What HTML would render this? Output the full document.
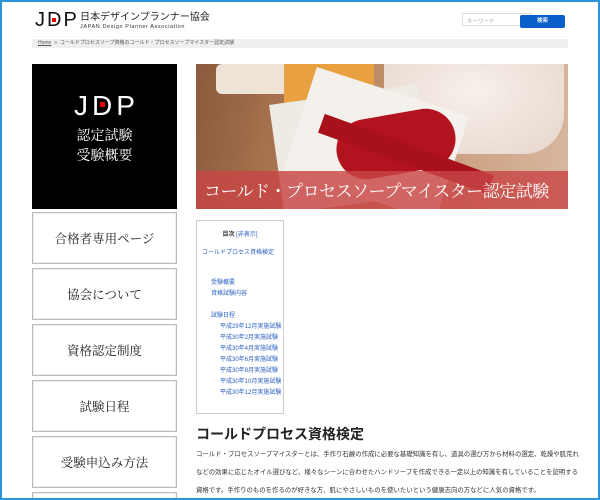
<!DOCTYPE html>
<html style="width:600px;height:500px;overflow:hidden"><head><meta charset="utf-8"><style>
*{margin:0;padding:0;box-sizing:border-box}
body{width:600px;height:500px;overflow:hidden;background:#fff;font-family:"Liberation Sans","Noto Sans CJK JP",sans-serif;position:relative}
.frame{position:absolute;left:0;top:0;width:600px;height:500px;border:2px solid #2a96d6;pointer-events:none;z-index:10}
.abs{position:absolute}
.nav{position:absolute;left:32px;width:145px;height:52px;border:1px solid #bbb;background:#fff;font-family:"Noto Serif CJK SC","Liberation Serif",serif;font-size:12.5px;color:#222;display:flex;align-items:center;justify-content:center;box-shadow:inset 0 0 0 1px #eee}
.toc a{display:block;color:#2a5fc0;font-size:6px;line-height:10px;text-decoration:none;white-space:nowrap}
p.t{position:absolute;left:196px;font-size:6.4px;color:#333;white-space:nowrap}
</style></head><body>
<div class="frame"></div>
<!-- header -->
<div class="abs" style="left:35px;top:9px;font-size:20px;letter-spacing:2px;color:#111;font-weight:300;line-height:22px">J<span style="position:relative">D<span style="position:absolute;left:5px;top:9px;width:4px;height:4px;background:#e00"></span></span>P</div>
<div class="abs" style="left:80px;top:12px;font-size:10px;color:#222;line-height:11px">日本デザインプランナー協会</div>
<div class="abs" style="left:80px;top:24px;font-size:5.5px;color:#333;letter-spacing:.6px">JAPAN Design Planner Association</div>
<div class="abs" style="left:462px;top:13px;width:70px;height:13px;border:1px solid #ddd;font-size:5.5px;color:#aaa;padding:3px 4px">キーワード</div>
<div class="abs" style="left:520px;top:15px;width:45px;height:13px;background:#0a5fc8;border-radius:2px;color:#fff;font-size:5.5px;text-align:center;line-height:13px;font-weight:bold">検索</div>
<div class="abs" style="left:32px;top:39px;width:536px;height:9px;background:#f0efed;font-size:5px;color:#555;line-height:9px;padding-left:6px;white-space:nowrap"><u>Home</u> &nbsp;&gt;&nbsp; コールドプロセスソープ資格のコールド・プロセスソープマイスター認定試験</div>
<!-- sidebar -->
<div class="abs" style="left:32px;top:64px;width:145px;height:145px;background:#000;color:#fff;text-align:center">
<div style="margin-top:27px;font-size:28px;letter-spacing:4px;padding-left:4px;font-weight:300;line-height:30px;position:relative">J<span style="position:relative">D<span style="position:absolute;left:8px;top:12px;width:5px;height:5px;background:#e00"></span></span>P</div>
<div style="font-family:'Noto Serif CJK SC',serif;font-size:14px;line-height:20px;margin-top:4px">認定試験<br>受験概要</div></div>
<div class="nav" style="top:212px">合格者専用ページ</div>
<div class="nav" style="top:268px">協会について</div>
<div class="nav" style="top:324px">資格認定制度</div>
<div class="nav" style="top:380px">試験日程</div>
<div class="nav" style="top:436px">受験申込み方法</div>
<div class="nav" style="top:492px;height:8px">&nbsp;</div>
<!-- hero -->
<div class="abs" style="left:196px;top:64px;width:372px;height:145px;overflow:hidden;background:linear-gradient(100deg,#8a5a3c 0%,#b07a55 30%,#c89a78 60%,#d8b8a0 100%)">
<div class="abs" style="left:20px;top:0;width:100px;height:30px;background:#eee3d6;border-radius:6px"></div>
<div class="abs" style="left:88px;top:0;width:90px;height:40px;background:#e8a040"></div>
<div class="abs" style="left:188px;top:0;width:180px;height:90px;background:radial-gradient(ellipse at 50% 30%,#f7f0ea,#e6d6cc);border-radius:0 0 40px 40px"></div>
<div class="abs" style="left:80px;top:30px;width:150px;height:110px;background:#eeeae4;transform:rotate(-8deg)"></div>
<div class="abs" style="left:100px;top:25px;width:160px;height:110px;background:#f4f1ec;transform:rotate(18deg)"></div>
<div class="abs" style="left:140px;top:50px;width:120px;height:60px;background:#b3121f;border-radius:30px;transform:rotate(-10deg)"></div>
<div class="abs" style="left:120px;top:80px;width:180px;height:20px;background:#a8101c;transform:rotate(20deg)"></div>
<div class="abs" style="left:0;top:107px;width:372px;height:38px;background:rgba(200,70,70,.82)"></div>
<div class="abs" style="left:8px;top:113px;font-family:'Noto Serif CJK SC',serif;font-size:17px;color:#fff;white-space:nowrap;letter-spacing:-.5px">コールド・プロセスソープマイスター認定試験</div>
</div>
<!-- toc -->
<div class="abs toc" style="left:196px;top:220px;width:88px;height:194px;border:1px solid #ccc;padding:8px 0 0 5px">
<div style="text-align:center;font-size:6px;color:#333;margin-right:5px;margin-bottom:10px"><b>目次</b> <span style="color:#2a5fc0">[非表示]</span></div>
<a>コールドプロセス資格検定</a>
<a style="margin-top:20px;padding-left:9px">受験概要</a>
<a style="padding-left:9px;margin-top:1px">資格試験内容</a>
<a style="margin-top:12px;padding-left:9px">試験日程</a>
<a style="padding-left:18px;margin-top:1px">平成29年12月実施試験</a>
<a style="padding-left:18px;margin-top:1px">平成30年2月実施試験</a>
<a style="padding-left:18px;margin-top:1px">平成30年4月実施試験</a>
<a style="padding-left:18px;margin-top:1px">平成30年6月実施試験</a>
<a style="padding-left:18px;margin-top:1px">平成30年8月実施試験</a>
<a style="padding-left:18px;margin-top:1px">平成30年10月実施試験</a>
<a style="padding-left:18px;margin-top:1px">平成30年12月実施試験</a>
</div>
<div class="abs" style="left:196px;top:424px;font-size:14px;font-weight:bold;color:#222">コールドプロセス資格検定</div>
<p class="t" style="top:449px">コールド・プロセスソープマイスターとは、手作り石鹸の作成に必要な基礎知識を有し、道具の選び方から材料の選定、乾燥や肌荒れ</p>
<p class="t" style="top:467px">などの効果に応じたオイル選びなど、様々なシーンに合わせたハンドソープを作成できる一定以上の知識を有していることを証明する</p>
<p class="t" style="top:485px">資格です。手作りのものを作るのが好きな方、肌にやさしいものを使いたいという健康志向の方などに人気の資格です。</p>
</body></html>
